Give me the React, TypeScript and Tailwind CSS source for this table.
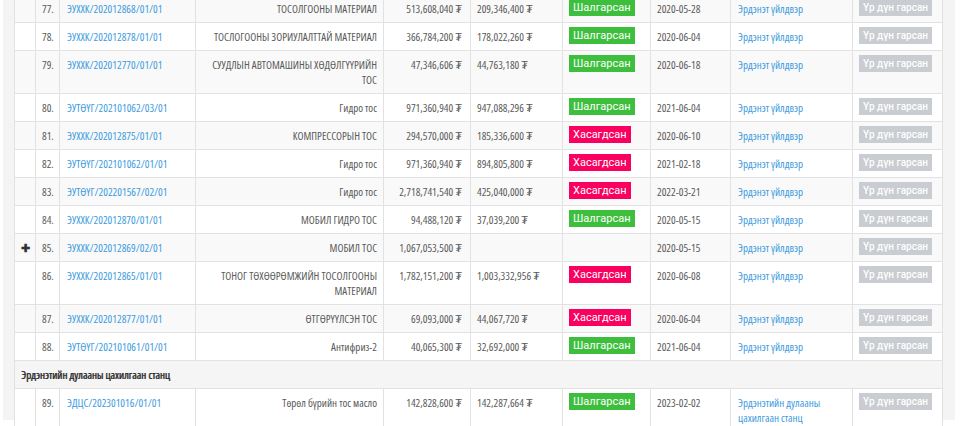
import React from "react";

type Status = "ok" | "rejected" | null;

interface TenderRow {
  no: number;
  code: string;
  name: string;
  budget: string;
  offer: string;
  status: Status;
  date: string;
  org: string;
  expand?: boolean;
}

const ORG = "Эрдэнэт үйлдвэр";

const rows: TenderRow[] = [
  { no: 77, code: "ЭУХХК/202012868/01/01", name: "ТОСОЛГООНЫ МАТЕРИАЛ", budget: "513,608,040 ₮", offer: "209,346,400 ₮", status: "ok", date: "2020-05-28", org: ORG },
  { no: 78, code: "ЭУХХК/202012878/01/01", name: "ТОСЛОГООНЫ ЗОРИУЛАЛТТАЙ МАТЕРИАЛ", budget: "366,784,200 ₮", offer: "178,022,260 ₮", status: "ok", date: "2020-06-04", org: ORG },
  { no: 79, code: "ЭУХХК/202012770/01/01", name: "СУУДЛЫН АВТОМАШИНЫ ХӨДӨЛГҮҮРИЙН\nТОС", budget: "47,346,606 ₮", offer: "44,763,180 ₮", status: "ok", date: "2020-06-18", org: ORG },
  { no: 80, code: "ЭУТӨҮГ/202101062/03/01", name: "Гидро тос", budget: "971,360,940 ₮", offer: "947,088,296 ₮", status: "ok", date: "2021-06-04", org: ORG },
  { no: 81, code: "ЭУХХК/202012875/01/01", name: "КОМПРЕССОРЫН ТОС", budget: "294,570,000 ₮", offer: "185,336,600 ₮", status: "rejected", date: "2020-06-10", org: ORG },
  { no: 82, code: "ЭУТӨҮГ/202101062/01/01", name: "Гидро тос", budget: "971,360,940 ₮", offer: "894,805,800 ₮", status: "rejected", date: "2021-02-18", org: ORG },
  { no: 83, code: "ЭУТӨҮГ/202201567/02/01", name: "Гидро тос", budget: "2,718,741,540 ₮", offer: "425,040,000 ₮", status: "rejected", date: "2022-03-21", org: ORG },
  { no: 84, code: "ЭУХХК/202012870/01/01", name: "МОБИЛ ГИДРО ТОС", budget: "94,488,120 ₮", offer: "37,039,200 ₮", status: "ok", date: "2020-05-15", org: ORG },
  { no: 85, code: "ЭУХХК/202012869/02/01", name: "МОБИЛ ТОС", budget: "1,067,053,500 ₮", offer: "", status: null, date: "2020-05-15", org: ORG, expand: true },
  { no: 86, code: "ЭУХХК/202012865/01/01", name: "ТОНОГ ТӨХӨӨРӨМЖИЙН ТОСОЛГООНЫ\nМАТЕРИАЛ", budget: "1,782,151,200 ₮", offer: "1,003,332,956 ₮", status: "rejected", date: "2020-06-08", org: ORG },
  { no: 87, code: "ЭУХХК/202012877/01/01", name: "ӨТГӨРҮҮЛСЭН ТОС", budget: "69,093,000 ₮", offer: "44,067,720 ₮", status: "rejected", date: "2020-06-04", org: ORG },
  { no: 88, code: "ЭУТӨҮГ/202101061/01/01", name: "Антифриз-2", budget: "40,065,300 ₮", offer: "32,692,000 ₮", status: "ok", date: "2021-06-04", org: ORG },
];

const last: TenderRow = {
  no: 89,
  code: "ЭДЦС/202301016/01/01",
  name: "Төрөл бүрийн тос масло",
  budget: "142,828,600 ₮",
  offer: "142,287,664 ₮",
  status: "ok",
  date: "2023-02-02",
  org: "Эрдэнэтийн дулааны\nцахилгаан станц",
};

const td = "border border-[#e2e2e2] px-[6px] py-[6px] align-top leading-[15px] whitespace-nowrap";
const tdBox = "border border-[#e2e2e2] px-[6px] pt-[4px] pb-[6px] align-top leading-[15px]";

function StatusBadge({ status }: { status: Status }) {
  if (!status) return null;
  const ok = status === "ok";
  return (
    <span
      className={`block w-fit px-[4px] h-[17px] leading-[17px] text-[11px] text-white font-['Roboto',sans-serif] font-stretch-normal ${
        ok ? "bg-[#3dbf3d]" : "bg-[#fa005f]"
      }`}
    >
      {ok ? "Шалгарсан" : "Хасагдсан"}
    </span>
  );
}

function Row({ r, striped }: { r: TenderRow; striped: boolean }) {
  return (
    <tr className={striped ? "bg-[#f9f9f9]" : "bg-white"}>
      <td className={`${td} text-center`}>
        {r.expand && <span className="text-[#333] font-bold text-[11px]">✚</span>}
      </td>
      <td className={`${td} text-right`}>{r.no}.</td>
      <td className={`${td} pl-[7px]`}>
        <a className="text-[#3d9be0]">{r.code}</a>
      </td>
      <td className={`${td} text-right whitespace-pre-line`}>{r.name}</td>
      <td className={`${td} text-right pr-[8px]`}>{r.budget}</td>
      <td className={td}>{r.offer}</td>
      <td className={tdBox}>
        <StatusBadge status={r.status} />
      </td>
      <td className={td}>{r.date}</td>
      <td className={`${td} pl-[7px] whitespace-pre-line`}>
        <a className="text-[#3d9be0]">{r.org}</a>
      </td>
      <td className={tdBox}>
        <span className="block w-fit bg-[#c9ccd0] text-white px-[4px] h-[17px] leading-[17px] text-[10px] font-medium whitespace-nowrap font-['Roboto',sans-serif] font-stretch-normal">
          Үр дүн гарсан
        </span>
      </td>
    </tr>
  );
}

export default function App() {
  return (
    <div className="w-[975px] h-[426px] overflow-hidden bg-white pl-[3px]">
      <div className="w-[952px] h-full bg-[#f4f4f4] pl-[11px] pr-[13px]">
        <table className="-mt-[6px] w-[928px] table-fixed border-collapse text-[11px] text-[#5a5a5a] font-['Open_Sans',sans-serif] font-stretch-[75%]">
          <colgroup>
            <col className="w-[21px]" />
            <col className="w-[24px]" />
            <col className="w-[136px]" />
            <col className="w-[188px]" />
            <col className="w-[87px]" />
            <col className="w-[92px]" />
            <col className="w-[88px]" />
            <col className="w-[80px]" />
            <col className="w-[122px]" />
            <col className="w-[90px]" />
          </colgroup>
          <tbody>
            {rows.map((r) => (
              <Row key={r.no} r={r} striped={r.no % 2 === 1} />
            ))}
            <tr className="bg-[#f5f5f5]">
              <td colSpan={10} className={`${td} text-[#333] [text-shadow:0.5px_0_0_#333]`}>
                Эрдэнэтийн дулааны цахилгаан станц
              </td>
            </tr>
            <Row r={last} striped={false} />
          </tbody>
        </table>
      </div>
    </div>
  );
}
